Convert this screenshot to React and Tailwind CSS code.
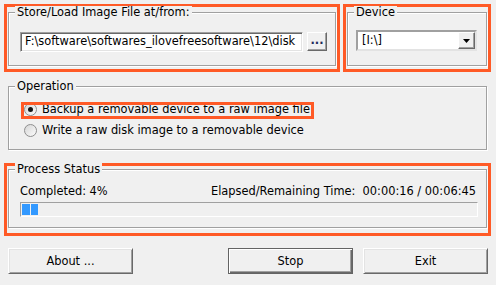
import React from 'react';

const ORANGE = 'border-[#ff5a26]';

function GroupBox({ label, className = '', children }) {
  return (
    <div
      className={`relative border border-[#a0a0a0] shadow-[inset_1px_1px_0_#fff,1px_1px_0_#fff] ${className}`}
    >
      <span className="absolute -top-[7px] left-[6px] bg-[#f0f0f0] px-[2px] leading-[13px] whitespace-nowrap">
        {label}
      </span>
      {children}
    </div>
  );
}

function Button({ children, isDefault = false }) {
  const face = isDefault
    ? 'border border-[#646464] shadow-[inset_1px_1px_0_#fff,inset_-1px_-1px_0_#696969,inset_-2px_-2px_0_#a0a0a0]'
    : 'border border-t-white border-l-white border-b-[#696969] border-r-[#696969] shadow-[inset_1px_1px_0_#e3e3e3,inset_-1px_-1px_0_#a0a0a0]';
  return (
    <button className={`flex h-[26px] w-[125px] items-center justify-center bg-[#f0f0f0] leading-[13px] ${face}`}>
      {children}
    </button>
  );
}

function Radio({ checked, label }) {
  return (
    <div className="flex h-[13px] items-center">
      <span className="flex h-[13px] w-[13px] shrink-0 items-center justify-center rounded-full border border-[#8f8f8f] bg-gradient-to-br from-[#d6d6d6] to-[#fcfcfc]">
        {checked && <span className="h-[5px] w-[5px] rounded-full bg-[#151515]" />}
      </span>
      <span className="ml-[5px] leading-[13px] whitespace-nowrap">{label}</span>
    </div>
  );
}

export default function App() {
  return (
    <div className="flex h-[285px] w-[496px] flex-col bg-[#f0f0f0] px-[4px] pt-[4px] font-['DejaVu_Sans',Tahoma,sans-serif] text-[11.4px] text-black">
      {/* source / device */}
      <div className="flex h-[68px] gap-[3px]">
        <div className={`flex w-[336px] flex-col border-[3px] ${ORANGE} px-[1px] pt-[5px] pb-[3px]`}>
          <GroupBox label="Store/Load Image File at/from:" className="flex-1 pl-[11px] pt-[19px]">
            <div className="flex items-start gap-[4px]">
              <div className="flex h-[20px] w-[283px] items-center overflow-hidden border border-t-[#a0a0a0] border-l-[#a0a0a0] border-b-white border-r-white bg-white pl-[4px] whitespace-nowrap shadow-[inset_1px_1px_0_#696969,inset_-1px_-1px_0_#e3e3e3]">
                {'F:\\software\\softwares_ilovefreesoftware\\12\\disk'}
              </div>
              <button className="flex h-[19px] w-[20px] items-center justify-center border border-t-white border-l-white border-b-[#696969] border-r-[#696969] bg-[#f0f0f0] pb-[3px] font-bold leading-[10px] text-[#1e2a5a] shadow-[inset_-1px_-1px_0_#a0a0a0]">
                ...
              </button>
            </div>
          </GroupBox>
        </div>
        <div className={`flex w-[148px] flex-col border-[3px] ${ORANGE} px-[1px] pt-[5px] pb-[3px]`}>
          <GroupBox label="Device" className="flex-1 pl-[8px] pt-[17px]">
            <div className="flex h-[21px] w-[121px] items-center justify-between border-2 border-t-[#a0a0a0] border-l-[#a0a0a0] border-b-[#e3e3e3] border-r-[#e3e3e3] bg-white pl-[4px]">
              <span className="leading-[13px]">{'[I:\\]'}</span>
              <span className="flex h-[17px] w-[17px] items-center justify-center border border-t-white border-l-white border-b-[#696969] border-r-[#696969] bg-[#f0f0f0] shadow-[inset_-1px_-1px_0_#a0a0a0]">
                <svg width="7" height="4" viewBox="0 0 7 4">
                  <path d="M0 0h7L3.5 4z" fill="#000" />
                </svg>
              </span>
            </div>
          </GroupBox>
        </div>
      </div>

      {/* operation */}
      <GroupBox label="Operation" className="mt-[14px] ml-[4px] mr-[5px] h-[64px] pl-[15px] pt-[16px]">
        <div className="flex flex-col gap-[8px]">
          <div className="relative">
            <Radio checked label="Backup a removable device to a raw image file" />
            <div className={`pointer-events-none absolute -left-[3px] -top-[1px] h-[17px] w-[293px] border-[3px] ${ORANGE}`} />
          </div>
          <Radio label="Write a raw disk image to a removable device" />
        </div>
      </GroupBox>

      {/* status */}
      <div className={`mt-[13px] flex h-[73px] w-[487px] flex-col border-[3px] ${ORANGE} px-[1px] pt-[3px] pb-[5px]`}>
        <GroupBox label="Process Status" className="flex-1 pl-[11px] pr-[8px] pt-[15px]">
          <div className="flex justify-between pr-[2px] leading-[13px]">
            <span>Completed: 4%</span>
            <span className="whitespace-pre">Elapsed/Remaining Time:  00:00:16 / 00:06:45</span>
          </div>
          <div className="mt-[4px] flex h-[15px] gap-[1px] border border-t-[#a0a0a0] border-l-[#a0a0a0] border-b-white border-r-white p-[1px]">
            <span className="h-[11px] w-[8px] bg-[#3399ff]" />
            <span className="h-[11px] w-[7px] bg-[#3399ff]" />
          </div>
        </GroupBox>
      </div>

      {/* buttons */}
      <div className="mx-[4px] mt-[12px] flex">
        <Button>About ...</Button>
        <div className="ml-auto" />
        <Button isDefault>Stop</Button>
        <div className="ml-[10px]" />
        <Button>Exit</Button>
      </div>
    </div>
  );
}
